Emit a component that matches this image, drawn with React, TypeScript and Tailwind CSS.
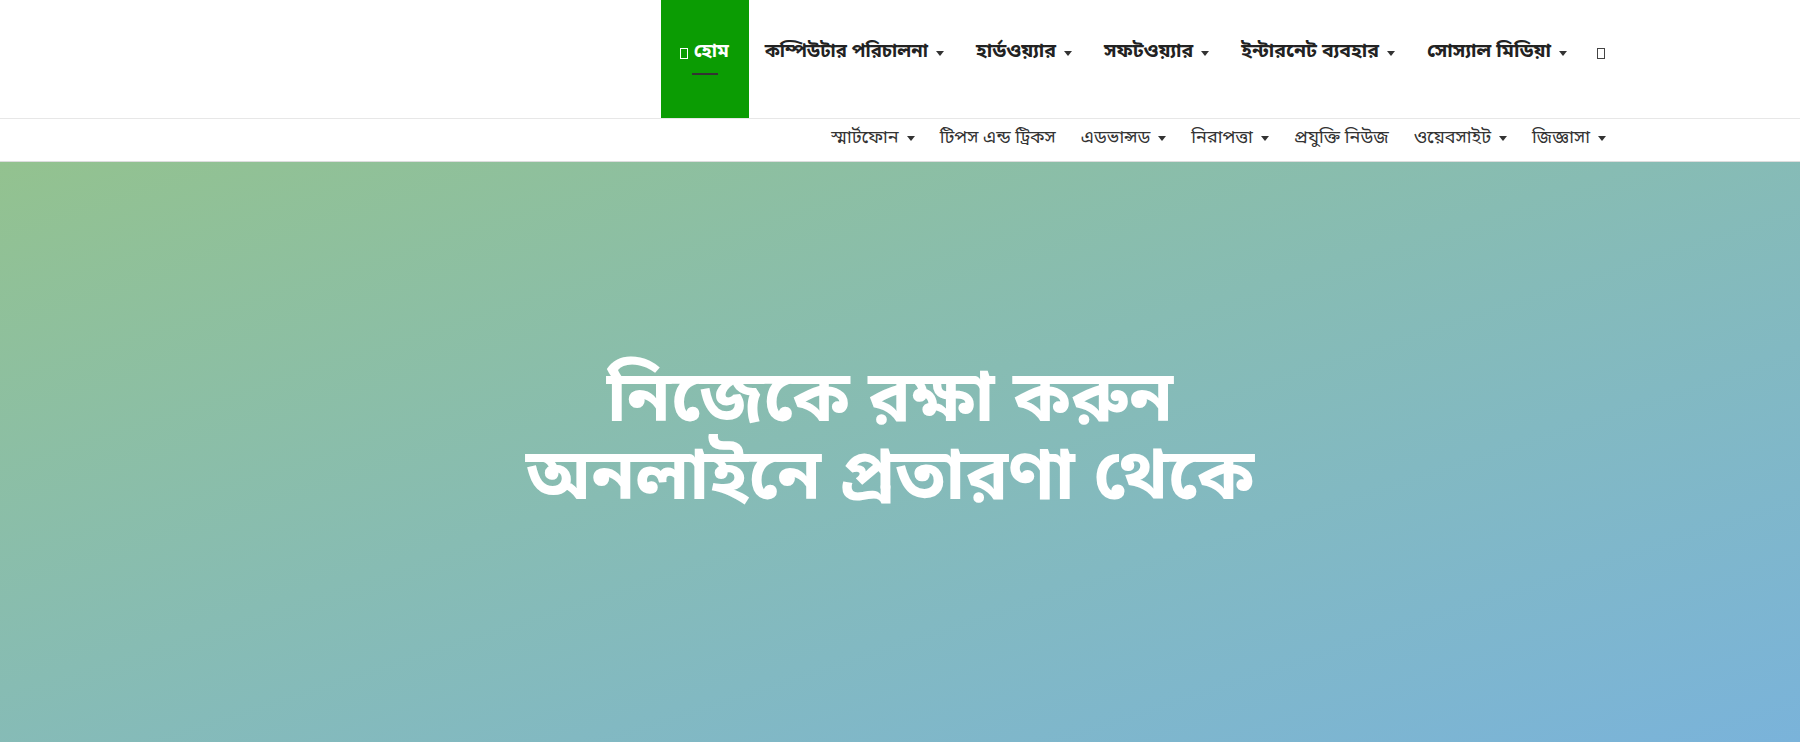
const Caret = () => (
  <span className="ml-2 inline-block h-0 w-0 border-x-[4.5px] border-t-[5px] border-x-transparent border-t-[#333] align-middle" />
);

const Tofu = ({ className }: { className: string }) => (
  <span className={`inline-block h-[11px] w-[8px] border ${className}`} />
);

const topItems = [
  { label: "কম্পিউটার পরিচালনা", size: "text-[18.5px]" },
  { label: "হার্ডওয়্যার", size: "text-[19.5px]" },
  { label: "সফটওয়্যার", size: "text-[19.5px]" },
  { label: "ইন্টারনেট ব্যবহার", size: "text-[19.5px]" },
  { label: "সোস্যাল মিডিয়া", size: "text-[19.5px]" },
];

const subItems = [
  { label: "স্মার্টফোন", caret: true },
  { label: "টিপস এন্ড ট্রিকস", caret: false },
  { label: "এডভান্সড", caret: true },
  { label: "নিরাপত্তা", caret: true },
  { label: "প্রযুক্তি নিউজ", caret: false },
  { label: "ওয়েবসাইট", caret: true },
  { label: "জিজ্ঞাসা", caret: true },
];

const App = () => {
  return (
    <div
      className="min-h-screen bg-white"
      style={{ fontFamily: '"Noto Sans Bengali", "Noto Sans", sans-serif' }}
    >
      {/* Top navigation */}
      <header className="h-[119px] border-b border-[#e7e7e7]">
        <nav className="flex h-full items-stretch justify-end pr-[195px]">
          <a className="relative flex w-[88px] items-center bg-[#0b9c03] pb-3 pl-[19px] text-[19px] font-bold whitespace-nowrap text-white">
            <Tofu className="mr-[6px] border-white" />
            হোম
            <span className="absolute left-[31px] top-[73px] h-[2px] w-[26px] bg-[#333]" />
          </a>
          {topItems.map((item) => (
            <a
              key={item.label}
              className={`flex items-center px-4 pb-3 font-bold text-[#222] ${item.size}`}
            >
              {item.label}
              <Caret />
            </a>
          ))}
          <a className="flex items-center pb-3 pl-[14px]">
            <Tofu className="border-[#444]" />
          </a>
        </nav>
      </header>

      {/* Secondary navigation */}
      <div className="h-[43px] border-b border-[#ddd]">
        <nav className="flex h-full items-center justify-end gap-[25px] pb-1 pr-[194px] text-[18px] text-[#333]">
          {subItems.map((item) => (
            <a key={item.label} className="flex items-center">
              {item.label}
              {item.caret && <Caret />}
            </a>
          ))}
        </nav>
      </div>

      {/* Hero */}
      <section className="flex h-[580px] items-center justify-center bg-gradient-to-br from-[#93c28f] to-[#7ab3da] pb-[20px] pr-[20px]">
        <h1 className="text-center text-[71px] font-bold leading-[78px] text-white">
          নিজেকে রক্ষা করুন
          <br />
          অনলাইনে প্রতারণা থেকে
        </h1>
      </section>
    </div>
  );
};

export default App;
